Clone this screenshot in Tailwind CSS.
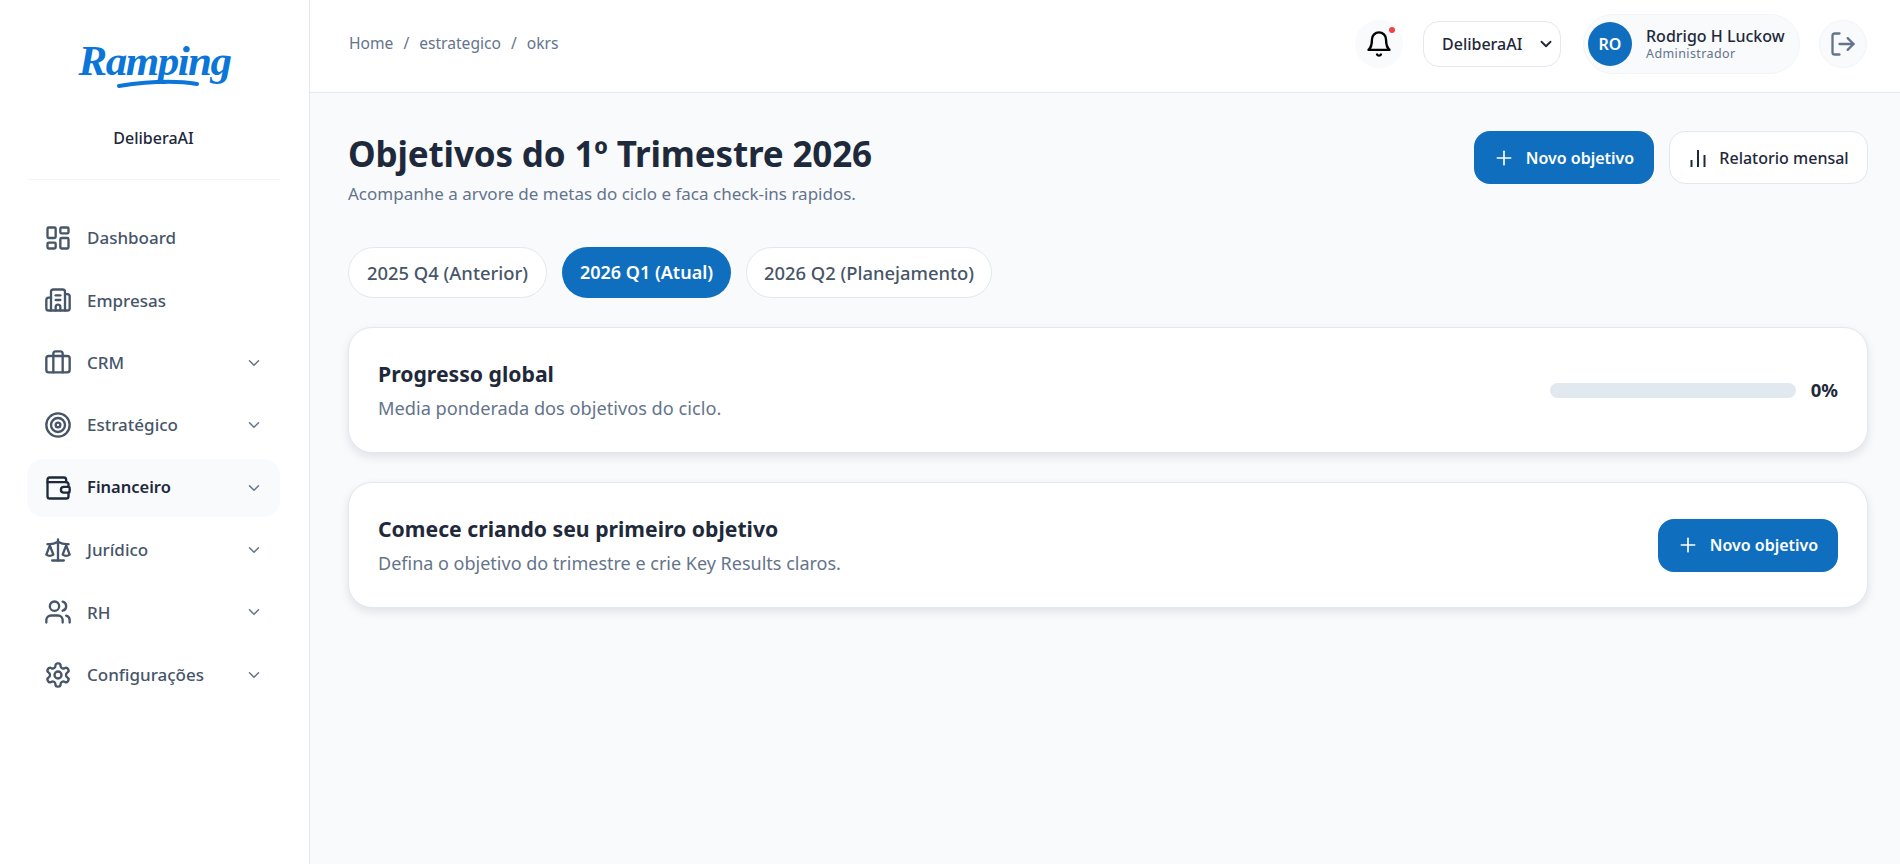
<!DOCTYPE html>
<html lang="pt-BR">
<head>
    <meta charset="UTF-8">
    <meta name="viewport" content="width=device-width, initial-scale=1.0">
    <script src="https://cdn.jsdelivr.net/npm/@tailwindcss/browser@4"></script>
    <title>Objetivos</title>
</head>
<body class="bg-[#f8fafc] h-screen overflow-hidden flex font-['Noto_Sans',sans-serif] text-[#1e293b]">
    <!-- Sidebar -->
    <aside class="w-[310px] shrink-0 bg-white border-r border-[#e2e8f0] flex flex-col pl-[27px] pr-[29px]">
        <div class="h-[180px] border-b border-[#f1f5f9] flex flex-col items-center shrink-0">
            <div class="relative mt-[29px] h-[64px] w-[150px] text-center whitespace-nowrap font-['Liberation_Serif',serif] italic font-bold text-[43px] leading-[64px] tracking-[-1.5px] text-[#0b76d8]">
                Ramping
                <svg class="absolute left-[38px] top-[48px]" width="84" height="12" viewBox="0 0 84 12" fill="none">
                    <path d="M2 9C28 5 56 3 80 7" stroke="#0b76d8" stroke-width="4" stroke-linecap="round"/>
                </svg>
            </div>
            <div class="mt-[33px] text-[16px] leading-[24px] font-medium">DeliberaAI</div>
        </div>

        <nav class="mt-[29px] flex flex-col gap-[4.4px] text-[#475569] text-[17px] font-medium">
            <a class="h-[58px] rounded-2xl flex items-center pl-[17px] pr-[17px]">
                <svg class="w-7 h-7 shrink-0" viewBox="0 0 24 24" fill="none" stroke="currentColor" stroke-width="2" stroke-linecap="round" stroke-linejoin="round">
                    <rect x="3" y="3" width="7" height="9" rx="1"/><rect x="14" y="3" width="7" height="5" rx="1"/><rect x="14" y="12" width="7" height="9" rx="1"/><rect x="3" y="16" width="7" height="5" rx="1"/>
                </svg>
                <span class="ml-[15px] flex-1">Dashboard</span>
            </a>
            <a class="h-[58px] rounded-2xl flex items-center pl-[17px] pr-[17px]">
                <svg class="w-7 h-7 shrink-0" viewBox="0 0 24 24" fill="none" stroke="currentColor" stroke-width="2" stroke-linecap="round" stroke-linejoin="round">
                    <path d="M10 12h4"/><path d="M10 8h4"/><path d="M14 21v-3a2 2 0 0 0-4 0v3"/><path d="M6 10H4a2 2 0 0 0-2 2v7a2 2 0 0 0 2 2h16a2 2 0 0 0 2-2V9a2 2 0 0 0-2-2h-2"/><path d="M6 21V5a2 2 0 0 1 2-2h8a2 2 0 0 1 2 2v16"/>
                </svg>
                <span class="ml-[15px] flex-1">Empresas</span>
            </a>
            <a class="h-[58px] rounded-2xl flex items-center pl-[17px] pr-[17px]">
                <svg class="w-7 h-7 shrink-0" viewBox="0 0 24 24" fill="none" stroke="currentColor" stroke-width="2" stroke-linecap="round" stroke-linejoin="round">
                    <path d="M16 20V4a2 2 0 0 0-2-2h-4a2 2 0 0 0-2 2v16"/><rect x="2" y="6" width="20" height="14" rx="2"/>
                </svg>
                <span class="ml-[15px] flex-1">CRM</span>
                <svg class="w-[18px] h-[18px] text-[#64748b]" viewBox="0 0 24 24" fill="none" stroke="currentColor" stroke-width="2" stroke-linecap="round" stroke-linejoin="round"><path d="m6 9 6 6 6-6"/></svg>
            </a>
            <a class="h-[58px] rounded-2xl flex items-center pl-[17px] pr-[17px]">
                <svg class="w-7 h-7 shrink-0" viewBox="0 0 24 24" fill="none" stroke="currentColor" stroke-width="2" stroke-linecap="round" stroke-linejoin="round">
                    <circle cx="12" cy="12" r="10"/><circle cx="12" cy="12" r="6"/><circle cx="12" cy="12" r="2"/>
                </svg>
                <span class="ml-[15px] flex-1">Estratégico</span>
                <svg class="w-[18px] h-[18px] text-[#64748b]" viewBox="0 0 24 24" fill="none" stroke="currentColor" stroke-width="2" stroke-linecap="round" stroke-linejoin="round"><path d="m6 9 6 6 6-6"/></svg>
            </a>
            <a class="h-[58px] rounded-2xl flex items-center pl-[17px] pr-[17px] bg-[#f8fafc] text-[#1e293b]">
                <svg class="w-7 h-7 shrink-0" viewBox="0 0 24 24" fill="none" stroke="currentColor" stroke-width="2" stroke-linecap="round" stroke-linejoin="round">
                    <path d="M19 7V5a2 2 0 0 0-2-2H5a2 2 0 0 0-2 2v14a2 2 0 0 0 2 2h14a2 2 0 0 0 2-2v-3"/><path d="M3 7h16a2 2 0 0 1 2 2v2"/><path d="M21 11h-4a2.5 2.5 0 0 0 0 5h4a1 1 0 0 0 1-1v-3a1 1 0 0 0-1-1Z"/>
                </svg>
                <span class="ml-[15px] flex-1 font-semibold text-[16.5px]">Financeiro</span>
                <svg class="w-[18px] h-[18px] text-[#64748b]" viewBox="0 0 24 24" fill="none" stroke="currentColor" stroke-width="2" stroke-linecap="round" stroke-linejoin="round"><path d="m6 9 6 6 6-6"/></svg>
            </a>
            <a class="h-[58px] rounded-2xl flex items-center pl-[17px] pr-[17px]">
                <svg class="w-7 h-7 shrink-0" viewBox="0 0 24 24" fill="none" stroke="currentColor" stroke-width="2" stroke-linecap="round" stroke-linejoin="round">
                    <path d="m16 16 3-8 3 8c-.87.65-1.92 1-3 1s-2.13-.35-3-1Z"/><path d="m2 16 3-8 3 8c-.87.65-1.92 1-3 1s-2.13-.35-3-1Z"/><path d="M7 21h10"/><path d="M12 3v18"/><path d="M3 7h2c2 0 5-1 7-2 2 1 5 2 7 2h2"/>
                </svg>
                <span class="ml-[15px] flex-1">Jurídico</span>
                <svg class="w-[18px] h-[18px] text-[#64748b]" viewBox="0 0 24 24" fill="none" stroke="currentColor" stroke-width="2" stroke-linecap="round" stroke-linejoin="round"><path d="m6 9 6 6 6-6"/></svg>
            </a>
            <a class="h-[58px] rounded-2xl flex items-center pl-[17px] pr-[17px]">
                <svg class="w-7 h-7 shrink-0" viewBox="0 0 24 24" fill="none" stroke="currentColor" stroke-width="2" stroke-linecap="round" stroke-linejoin="round">
                    <path d="M16 21v-2a4 4 0 0 0-4-4H6a4 4 0 0 0-4 4v2"/><circle cx="9" cy="7" r="4"/><path d="M22 21v-2a4 4 0 0 0-3-3.87"/><path d="M16 3.13a4 4 0 0 1 0 7.75"/>
                </svg>
                <span class="ml-[15px] flex-1">RH</span>
                <svg class="w-[18px] h-[18px] text-[#64748b]" viewBox="0 0 24 24" fill="none" stroke="currentColor" stroke-width="2" stroke-linecap="round" stroke-linejoin="round"><path d="m6 9 6 6 6-6"/></svg>
            </a>
            <a class="h-[58px] rounded-2xl flex items-center pl-[17px] pr-[17px]">
                <svg class="w-7 h-7 shrink-0" viewBox="0 0 24 24" fill="none" stroke="currentColor" stroke-width="2" stroke-linecap="round" stroke-linejoin="round">
                    <path d="M12.22 2h-.44a2 2 0 0 0-2 2v.18a2 2 0 0 1-1 1.73l-.43.25a2 2 0 0 1-2 0l-.15-.08a2 2 0 0 0-2.73.73l-.22.38a2 2 0 0 0 .73 2.73l.15.1a2 2 0 0 1 1 1.72v.51a2 2 0 0 1-1 1.74l-.15.09a2 2 0 0 0-.73 2.73l.22.38a2 2 0 0 0 2.73.73l.15-.08a2 2 0 0 1 2 0l.43.25a2 2 0 0 1 1 1.73V20a2 2 0 0 0 2 2h.44a2 2 0 0 0 2-2v-.18a2 2 0 0 1 1-1.73l.43-.25a2 2 0 0 1 2 0l.15.08a2 2 0 0 0 2.73-.73l.22-.39a2 2 0 0 0-.73-2.73l-.15-.08a2 2 0 0 1-1-1.74v-.5a2 2 0 0 1 1-1.74l.15-.09a2 2 0 0 0 .73-2.73l-.22-.38a2 2 0 0 0-2.73-.73l-.15.08a2 2 0 0 1-2 0l-.43-.25a2 2 0 0 1-1-1.73V4a2 2 0 0 0-2-2z"/><circle cx="12" cy="12" r="3"/>
                </svg>
                <span class="ml-[15px] flex-1">Configurações</span>
                <svg class="w-[18px] h-[18px] text-[#64748b]" viewBox="0 0 24 24" fill="none" stroke="currentColor" stroke-width="2" stroke-linecap="round" stroke-linejoin="round"><path d="m6 9 6 6 6-6"/></svg>
            </a>
        </nav>
    </aside>

    <div class="flex-1 min-w-0 flex flex-col">
        <!-- Header -->
        <header class="h-[93px] shrink-0 bg-white border-b border-[#e2e8f0] flex items-center pl-[39px] pr-[33px] pb-[5px]">
            <div class="flex-1 flex items-center gap-[10px] text-[15.6px] text-[#64748b]">
                <span>Home</span><span>/</span><span>estrategico</span><span>/</span><span>okrs</span>
            </div>
            <button class="relative w-12 h-12 rounded-full bg-[#f8fafc] flex items-center justify-center text-black">
                <svg class="w-7 h-7" viewBox="0 0 24 24" fill="none" stroke="currentColor" stroke-width="2" stroke-linecap="round" stroke-linejoin="round">
                    <path d="M6 8a6 6 0 0 1 12 0c0 7 3 9 3 9H3s3-2 3-9"/><path d="M10.3 21a1.94 1.94 0 0 0 3.4 0"/>
                </svg>
                <span class="absolute top-[7px] right-[8px] w-[6px] h-[6px] rounded-full bg-[#ef4444]"></span>
            </button>
            <div class="ml-5 w-[138px] h-[46px] rounded-2xl border border-[#e2e8f0] bg-white flex items-center pl-[18px] pr-[5px] text-[16px] font-medium">
                <span class="flex-1">DeliberaAI</span>
                <svg class="w-[18px] h-[18px]" viewBox="0 0 24 24" fill="none" stroke="currentColor" stroke-width="2.5" stroke-linecap="round" stroke-linejoin="round"><path d="m6 9 6 6 6-6"/></svg>
            </div>
            <div class="ml-[22px] w-[217px] h-[60px] rounded-full border border-[#f1f5f9] bg-[#f8fafc] flex items-center pl-[4px]">
                <div class="w-11 h-11 rounded-full bg-[#106ebe] text-white flex items-center justify-center text-[16px] font-semibold">RO</div>
                <div class="ml-[14px] flex flex-col">
                    <span class="text-[16px] leading-[20px] font-medium">Rodrigo H Luckow</span>
                    <span class="text-[12.5px] leading-[15px] text-[#64748b] tracking-[0.4px]">Administrador</span>
                </div>
            </div>
            <button class="ml-[19px] w-12 h-12 rounded-full border border-[#f1f5f9] bg-[#f8fafc] flex items-center justify-center text-[#64748b]">
                <svg class="w-7 h-7" viewBox="0 0 24 24" fill="none" stroke="currentColor" stroke-width="2" stroke-linecap="round" stroke-linejoin="round">
                    <path d="M9 21H5a2 2 0 0 1-2-2V5a2 2 0 0 1 2-2h4"/><polyline points="16 17 21 12 16 7"/><line x1="21" y1="12" x2="9" y2="12"/>
                </svg>
            </button>
        </header>

        <!-- Main -->
        <main class="flex-1 pl-[38px] pr-[32px]">
            <div class="flex items-start justify-between mt-[38px]">
                <div>
                    <h1 class="text-[35px] leading-[46px] font-bold tracking-[-0.15px]">Objetivos do 1º Trimestre 2026</h1>
                    <p class="text-[17px] leading-[24px] text-[#64748b] mt-[5px]">Acompanhe a arvore de metas do ciclo e faca check-ins rapidos.</p>
                </div>
                <div class="flex gap-[15px]">
                    <button class="w-[180px] h-[53px] rounded-2xl bg-[#106ebe] text-white flex items-center justify-center gap-[12px] text-[16px] font-semibold">
                        <svg class="w-5 h-5" viewBox="0 0 24 24" fill="none" stroke="currentColor" stroke-width="2" stroke-linecap="round"><path d="M4 12h16"/><path d="M12 4v16"/></svg>
                        Novo objetivo
                    </button>
                    <button class="w-[199px] h-[53px] rounded-2xl border border-[#e2e8f0] bg-white flex items-center justify-center gap-[11px] text-[16px] font-medium">
                        <svg class="w-5 h-6" viewBox="0 0 20 24" fill="none" stroke="currentColor" stroke-width="2"><path d="M3.5 21v-7"/><path d="M10 21V4"/><path d="M16.5 21V9"/></svg>
                        Relatorio mensal
                    </button>
                </div>
            </div>

            <div class="flex gap-[15px] mt-[41px] text-[18.4px] font-medium text-[#475569]">
                <button class="w-[199px] h-[51px] rounded-full border border-[#e2e8f0] bg-white">2025 Q4 (Anterior)</button>
                <button class="w-[169px] h-[51px] rounded-full bg-[#106ebe] text-white font-semibold text-[18px]">2026 Q1 (Atual)</button>
                <button class="w-[246px] h-[51px] rounded-full border border-[#e2e8f0] bg-white">2026 Q2 (Planejamento)</button>
            </div>

            <section class="mt-[29px] h-[126px] rounded-[24px] border border-[#e2e8f0] bg-white shadow-[0_4px_10px_rgba(15,23,42,0.10)] flex items-center justify-between px-[29px]">
                <div>
                    <h2 class="text-[21.2px] leading-[30px] font-bold">Progresso global</h2>
                    <p class="text-[18.2px] leading-[26px] text-[#64748b] mt-[6px]">Media ponderada dos objetivos do ciclo.</p>
                </div>
                <div class="flex items-center gap-[15px]">
                    <div class="w-[246px] h-[15px] rounded-full bg-[#e2e8f0]"></div>
                    <span class="text-[18.5px] font-bold">0%</span>
                </div>
            </section>

            <section class="mt-[29px] h-[126px] rounded-[24px] border border-[#e2e8f0] bg-white shadow-[0_4px_10px_rgba(15,23,42,0.10)] flex items-center justify-between px-[29px]">
                <div>
                    <h2 class="text-[21.2px] leading-[30px] font-bold">Comece criando seu primeiro objetivo</h2>
                    <p class="text-[18px] leading-[26px] text-[#64748b] mt-[6px]">Defina o objetivo do trimestre e crie Key Results claros.</p>
                </div>
                <button class="w-[180px] h-[53px] rounded-2xl bg-[#106ebe] text-white flex items-center justify-center gap-[12px] text-[16px] font-semibold">
                    <svg class="w-5 h-5" viewBox="0 0 24 24" fill="none" stroke="currentColor" stroke-width="2" stroke-linecap="round"><path d="M4 12h16"/><path d="M12 4v16"/></svg>
                    Novo objetivo
                </button>
            </section>
        </main>
    </div>
</body>
</html>
